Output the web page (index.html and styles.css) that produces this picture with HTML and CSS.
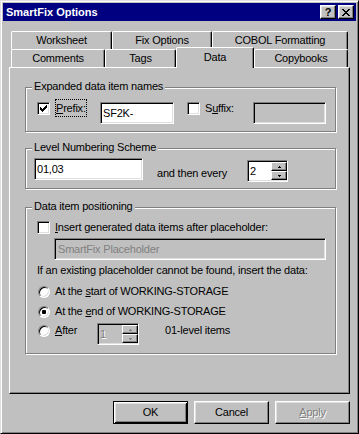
FILE: index.html
```html
<!DOCTYPE html>
<html>
<head>
<meta charset="utf-8">
<title>SmartFix Options</title>
<link rel="stylesheet" href="styles.css">
</head>
<body>
<div class="win">
  <div class="titlebar">
    <span class="title">SmartFix Options</span>
    <div class="caps">
      <div class="cap cap-help">?</div>
      <div class="cap"><svg width="8" height="7" viewBox="0 0 8 7" shape-rendering="crispEdges"><path fill="#000" d="M0 0h2v1H0z M6 0h2v1H6z M1 1h2v1H1z M5 1h2v1H5z M2 2h4v1H2z M3 3h2v1H3z M2 4h4v1H2z M1 5h2v1H1z M5 5h2v1H5z M0 6h2v1H0z M6 6h2v1H6z"/></svg></div>
    </div>
  </div>
  <div class="body">
    <div class="tabs">
      <div class="tabrow">
        <div class="tab t-ws">Worksheet</div>
        <div class="tab t-fix">Fix Options</div>
        <div class="tab t-cobol">COBOL Formatting</div>
      </div>
      <div class="tabrow">
        <div class="tab t-com">Comments</div>
        <div class="tab t-tags">Tags</div>
        <div class="tab t-data sel">Data</div>
        <div class="tab t-copy">Copybooks</div>
      </div>
    </div>
    <div class="panel">
      <div class="gb gb1">
        <span class="gb-title">Expanded data item names</span>
        <div class="row">
          <span class="check"><svg width="7" height="7" viewBox="0 0 7 7" shape-rendering="crispEdges"><path fill="#000" d="M6 0h1v1H6z M5 1h2v1H5z M0 2h1v1H0z M4 2h3v1H4z M0 3h2v1H0z M3 3h3v1H3z M0 4h5v1H0z M1 5h3v1H1z M2 6h1v1H2z"/></svg></span>
          <span class="focus"><u>P</u>refix:</span>
          <div class="edit e-prefix">SF2K-</div>
          <span class="check c-suffix"></span>
          <span class="lbl l-suffix">S<u>u</u>ffix:</span>
          <div class="edit dis e-suffix"></div>
        </div>
      </div>
      <div class="gb gb2">
        <span class="gb-title">Level Numbering Scheme</span>
        <div class="row">
          <div class="edit e-level">01,03</div>
          <span class="lbl l-every">and then every</span>
          <div class="edit spin s-every">
            <span>2</span>
            <div class="spinbtns">
              <div class="sb"><svg width="3" height="2" viewBox="0 0 3 2" shape-rendering="crispEdges"><path fill="#000" d="M1 0h1v1H1z M0 1h3v1H0z"/></svg></div>
              <div class="sb"><svg width="3" height="2" viewBox="0 0 3 2" shape-rendering="crispEdges"><path fill="#000" d="M0 0h3v1H0z M1 1h1v1H1z"/></svg></div>
            </div>
          </div>
        </div>
      </div>
      <div class="gb gb3">
        <span class="gb-title">Data item positioning</span>
        <div class="row">
          <span class="check"></span>
          <span class="lbl l-after-check"><u>I</u>nsert generated data items after placeholder:</span>
        </div>
        <div class="edit dis e-place">SmartFix Placeholder</div>
        <div class="p-if">If an existing placeholder cannot be found, insert the data:</div>
        <div class="row r1">
          <span class="radio"></span>
          <span class="lbl l-radio">At the <u>s</u>tart of WORKING-STORAGE</span>
        </div>
        <div class="row r2">
          <span class="radio on"></span>
          <span class="lbl l-radio">At the <u>e</u>nd of WORKING-STORAGE</span>
        </div>
        <div class="row r3">
          <span class="radio r3-radio"></span>
          <span class="lbl l-radio l-after"><u>A</u>fter</span>
          <div class="edit spin dis s-after">
            <span class="distext">1</span>
            <div class="spinbtns">
              <div class="sb"><svg width="3" height="2" viewBox="0 0 3 2" shape-rendering="crispEdges"><path fill="#808080" d="M1 0h1v1H1z M0 1h3v1H0z"/></svg></div>
              <div class="sb"><svg width="3" height="2" viewBox="0 0 3 2" shape-rendering="crispEdges"><path fill="#808080" d="M0 0h3v1H0z M1 1h1v1H1z"/></svg></div>
            </div>
          </div>
          <span class="lbl l-items">01-level items</span>
        </div>
      </div>
    </div>
    <div class="btns">
      <div class="btn default">OK</div>
      <div class="btn">Cancel</div>
      <div class="btn disabled"><span><u>A</u>pply</span></div>
    </div>
  </div>
</div>
</body>
</html>
```

FILE: styles.css
```css
* { box-sizing: border-box; }
html, body { margin: 0; padding: 0; background: #c0c0c0; }
body {
  font-family: "Liberation Sans", Arial, sans-serif;
  font-size: 11px;
  line-height: 13px;
  color: #000;
  letter-spacing: -0.2px;
}
u { text-decoration: underline; }

.win {
  width: 359px;
  height: 434px;
  background: #c0c0c0;
  border: 1px solid;
  border-color: #dfdfdf #000 #000 #dfdfdf;
  box-shadow: inset 1px 1px 0 #fff, inset -1px -1px 0 #808080;
  padding: 2px;
  display: flex;
  flex-direction: column;
}

.titlebar {
  height: 18px;
  flex: none;
  background: #000080;
  color: #fff;
  display: flex;
  align-items: center;
  justify-content: space-between;
  padding: 0 2px 0 3px;
}
.title { font-weight: bold; letter-spacing: 0; }
.caps { display: flex; gap: 2px; }
.cap {
  width: 16px;
  height: 14px;
  background: #c0c0c0;
  border: 1px solid;
  border-color: #fff #000 #000 #fff;
  box-shadow: inset -1px -1px 0 #808080, inset 1px 1px 0 #dfdfdf;
  display: flex;
  align-items: center;
  justify-content: center;
  color: #000;
}
.cap-help { font-weight: bold; letter-spacing: 0; line-height: 12px; }
.cap svg { display: block; }

.body {
  padding: 10px 6px 0 6px;
  display: flex;
  flex-direction: column;
}

.tabs { margin-left: 2px; }
.tabrow { display: flex; height: 18px; align-items: flex-start; }
.tab {
  height: 18px;
  flex: none;
  background: #c0c0c0;
  border-top: 1px solid #fff;
  border-left: 1px solid #fff;
  border-right: 1px solid #000;
  border-radius: 2px 2px 0 0;
  box-shadow: inset -1px 0 0 #808080;
  display: flex;
  align-items: center;
  justify-content: center;
}
.t-ws { width: 101px; }
.t-fix { width: 100px; }
.t-cobol { width: 136px; }
.t-com { width: 94px; }
.t-tags { width: 71px; }
.t-data { width: 78px; }
.t-copy { width: 94px; }
.tab.sel {
  height: 21px;
  margin-top: -2px;
  padding-bottom: 2px;
  position: relative;
  z-index: 2;
}

.panel {
  height: 327px;
  flex: none;
  border: 1px solid;
  border-color: #fff #000 #000 #fff;
  box-shadow: inset -1px -1px 0 #808080;
  padding: 19px 0 0 15px;
}

.gb {
  position: relative;
  width: 311px;
  border: 1px solid #808080;
  box-shadow: inset 1px 1px 0 #fff, 1px 1px 0 #fff;
}
.gb-title {
  position: absolute;
  left: 6px;
  top: -8px;
  padding: 0 2px;
  background: #c0c0c0;
}
.gb1 { height: 45px; padding: 14px 0 0 11px; }
.gb2 { height: 41px; margin-top: 16px; padding: 9px 0 0 8px; }
.gb3 { height: 147px; margin-top: 18px; padding: 13px 0 0 11px; }

.row { display: flex; align-items: flex-start; }

.check {
  width: 13px;
  height: 13px;
  flex: none;
  background: #fff;
  border: 1px solid;
  border-color: #808080 #fff #fff #808080;
  box-shadow: inset 1px 1px 0 #000, inset -1px -1px 0 #dfdfdf;
  display: flex;
  align-items: center;
  justify-content: center;
}
.check svg { display: block; }
.c-suffix { margin-left: 13px; }

.focus {
  flex: none;
  margin: -3px 0 0 5px;
  width: 32px;
  height: 18px;
  border: 1px dotted #000;
  padding-top: 1px;
  line-height: 14px;
}
.lbl { flex: none; margin-left: 5px; }
.l-suffix { width: 48px; }

.edit {
  height: 22px;
  flex: none;
  background: #fff;
  border: 1px solid;
  border-color: #808080 #fff #fff #808080;
  box-shadow: inset 1px 1px 0 #000, inset -1px -1px 0 #dfdfdf;
  padding: 0 0 0 2px;
  display: flex;
  align-items: center;
  white-space: nowrap;
}
.edit.dis { background: #c0c0c0; color: #808080; }
.e-prefix { width: 74px; margin-left: 13px; }
.e-suffix { width: 73px; }
.e-level { width: 109px; }
.l-every { margin: 9px 0 0 14px; width: 90px; }
.spin { width: 41px; padding-right: 0; }
.s-every { margin-top: 2px; }
.spinbtns {
  margin-left: auto;
  width: 16px;
  height: 18px;
  display: flex;
  flex-direction: column;
}
.sb {
  height: 9px;
  background: #c0c0c0;
  border: 1px solid;
  border-color: #fff #000 #000 #fff;
  box-shadow: inset -1px -1px 0 #808080;
  display: flex;
  align-items: center;
  justify-content: center;
}
.sb svg { display: block; }

.e-place { width: 272px; margin: 4px 0 0 17px; padding-left: 3px; }
.p-if { margin-top: 4px; }

.radio {
  width: 12px;
  height: 12px;
  flex: none;
  margin-left: 1px;
  border-radius: 50%;
  background: #fff;
  border: 1px solid;
  border-color: #808080 #fff #fff #808080;
  box-shadow: inset 1px 1px 0 #000, inset -1px -1px 0 #dfdfdf;
  display: flex;
  align-items: center;
  justify-content: center;
}
.radio.on::after {
  content: "";
  width: 4px;
  height: 4px;
  border-radius: 1px;
  background: #000;
}
.r1 { margin-top: 8px; align-items: center; }
.r2 { margin-top: 7px; align-items: center; }
.r3 { margin-top: 5px; }
.r3-radio { margin-top: 2px; }
.l-after { width: 42px; margin-top: 1px; }
.s-after { width: 42px; }
.distext { color: #808080; text-shadow: 1px 1px 0 #fff; }
.l-items { margin: 1px 0 0 26px; }

.btns {
  display: flex;
  justify-content: flex-end;
  gap: 6px;
  margin-top: 7px;
}
.btn {
  width: 75px;
  height: 23px;
  background: #c0c0c0;
  border: 1px solid;
  border-color: #fff #000 #000 #fff;
  box-shadow: inset -1px -1px 0 #808080, inset 1px 1px 0 #dfdfdf;
  display: flex;
  align-items: center;
  justify-content: center;
}
.btn.default {
  border-color: #000;
  box-shadow: inset 1px 1px 0 #fff, inset -1px -1px 0 #000, inset 2px 2px 0 #dfdfdf, inset -2px -2px 0 #808080;
}
.btn.disabled { color: #808080; text-shadow: 1px 1px 0 #fff; }
```
